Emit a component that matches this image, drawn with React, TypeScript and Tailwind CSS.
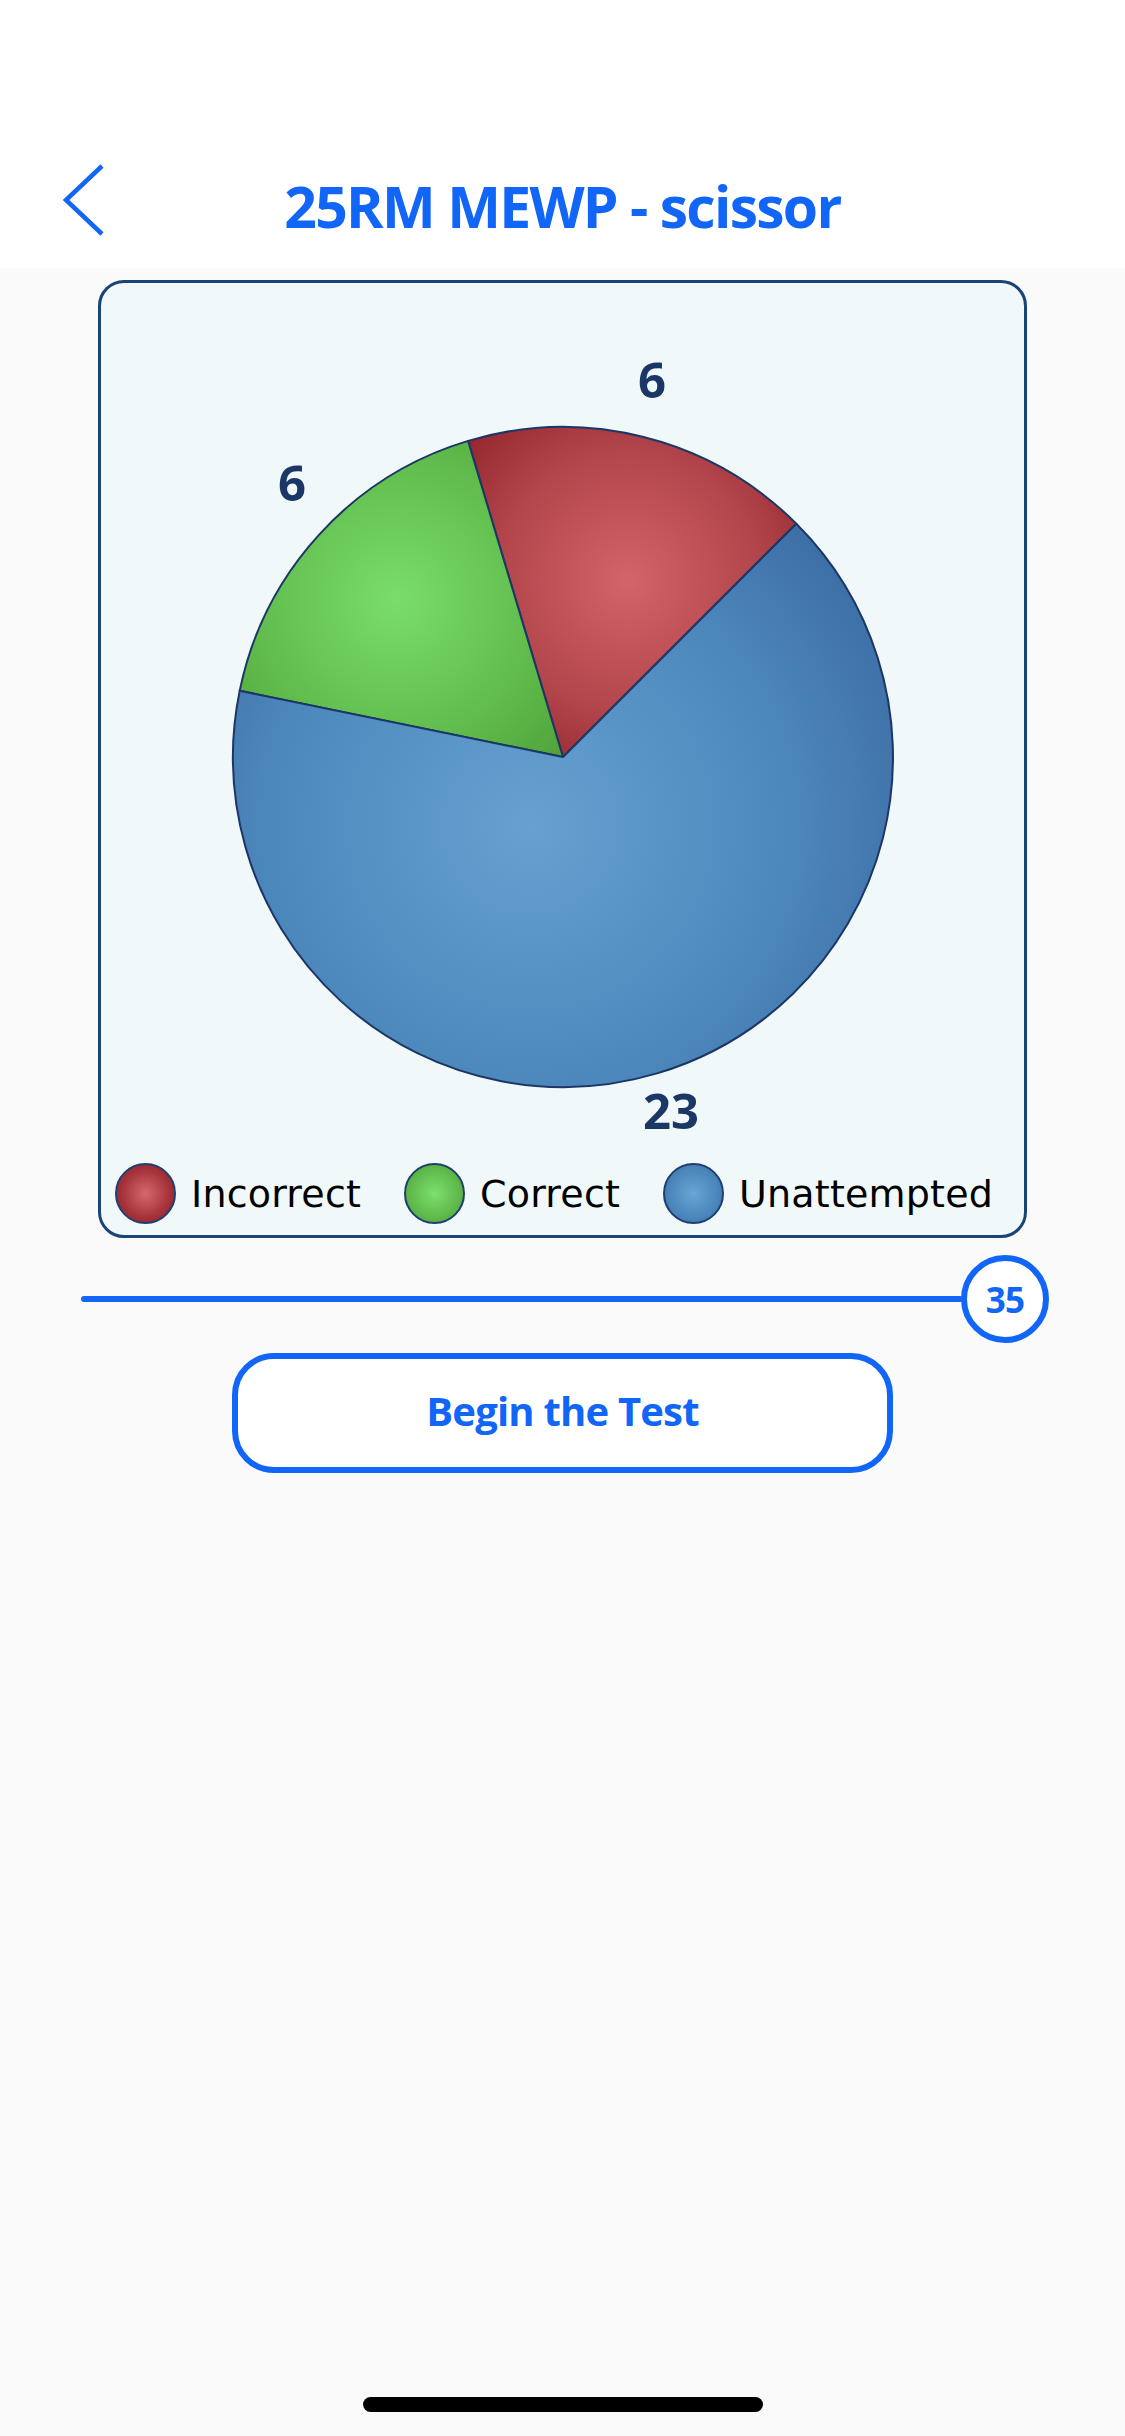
import React from 'react';

const BLUE = '#1166f7';

const slices = [
  { key: 'red', d: 'M462 474 L367.1 157.9 A330 330 0 0 1 695.3 240.7 Z' },
  { key: 'green', d: 'M462 474 L138.7 407.8 A330 330 0 0 1 367.1 157.9 Z' },
  { key: 'blue', d: 'M462 474 L695.3 240.7 A330 330 0 1 1 138.7 407.8 Z' },
];

const PieChart: React.FC = () => (
  <svg width="923" height="880" viewBox="0 0 923 880" className="block">
    <defs>
      <radialGradient id="g-red" gradientUnits="userSpaceOnUse" cx="527" cy="298" r="240">
        <stop offset="0" stopColor="#d3646a" />
        <stop offset="0.55" stopColor="#b2444b" />
        <stop offset="1" stopColor="#8b1d26" />
      </radialGradient>
      <radialGradient id="g-green" gradientUnits="userSpaceOnUse" cx="295" cy="317" r="240">
        <stop offset="0" stopColor="#7add6a" />
        <stop offset="0.55" stopColor="#62bf4f" />
        <stop offset="1" stopColor="#4f9f36" />
      </radialGradient>
      <radialGradient id="g-blue" gradientUnits="userSpaceOnUse" cx="429" cy="543" r="430">
        <stop offset="0" stopColor="#67a1d1" />
        <stop offset="0.6" stopColor="#4d88bd" />
        <stop offset="1" stopColor="#3a6aa2" />
      </radialGradient>
    </defs>
    {slices.map(s => (
      <path key={s.key} d={s.d} fill={`url(#g-${s.key})`} stroke="#1c3766" strokeWidth="2" strokeLinejoin="round" />
    ))}
    <g fill="#1b3766" fontFamily="'Open Sans', sans-serif" fontWeight="700" fontSize="49" textAnchor="middle">
      <text x="551" y="115">6</text>
      <text x="191" y="218">6</text>
      <text x="570" y="846">23</text>
    </g>
  </svg>
);

const LegendItem: React.FC<{ label: string; swatch: string }> = ({ label, swatch }) => (
  <div className="flex items-center gap-[15px]">
    <div className={`w-[61px] h-[61px] rounded-full border-2 border-[#1e3f72] ${swatch}`} />
    <span className="text-[38px] leading-none tracking-[0.005em] text-black font-['DejaVu_Sans',sans-serif]">{label}</span>
  </div>
);

export default function App() {
  return (
    <div className="w-[1125px] min-h-[2436px] bg-[#fafafa] flex flex-col font-['Open_Sans',sans-serif]">
      {/* header */}
      <div className="bg-white h-[268px] pt-[160px]">
        <div className="grid grid-cols-[1fr_auto_1fr] items-center h-[80px]">
          <div className="pl-[62px] flex items-center">
            <svg width="44" height="74" viewBox="0 0 44 74" fill="none">
              <path d="M40 3 L4 37 L40 71" stroke={BLUE} strokeWidth="4.5" strokeLinecap="butt" strokeLinejoin="miter" />
            </svg>
          </div>
          <h1 className="text-[57px] font-bold leading-none tracking-[-0.03em] text-[#1166f7] pt-[12px]">
            25RM MEWP - scissor
          </h1>
          <div />
        </div>
      </div>

      {/* chart card */}
      <div className="mt-[12px] ml-[98px] w-[929px] h-[958px] rounded-[26px] border-[3px] border-[#1a4477] bg-[#f0f8fa] flex flex-col">
        <PieChart />
        <div className="flex items-center gap-[43px] pl-[14px] h-[61px]">
          <LegendItem label="Incorrect" swatch="bg-[radial-gradient(circle_at_50%_50%,#d6686e_0%,#a53139_60%,#8b1d26_100%)]" />
          <LegendItem label="Correct" swatch="bg-[radial-gradient(circle_at_50%_50%,#7de06d_0%,#5fba4b_60%,#4c9b34_100%)]" />
          <LegendItem label="Unattempted" swatch="bg-[radial-gradient(circle_at_50%_50%,#6aa5d4_0%,#4b86bc_60%,#3a6aa2_100%)]" />
        </div>
      </div>

      {/* question count slider */}
      <div className="mt-[17px] flex items-center pl-[81px] pr-[76px]">
        <div className="flex-1 h-[6px] rounded-full bg-[#1166f7]" />
        <div className="-ml-[2px] w-[88px] h-[88px] rounded-full border-[6px] border-[#1166f7] bg-white flex items-center justify-center">
          <span className="text-[35px] font-bold leading-none text-[#1166f7] tracking-[-0.02em]">35</span>
        </div>
      </div>

      {/* begin button */}
      <div className="mt-[10px] flex justify-center">
        <button className="w-[661px] h-[120px] rounded-[42px] border-[6px] border-[#1166f7] bg-white flex items-center justify-center pb-[5px]">
          <span className="text-[40px] font-bold leading-none tracking-[-0.02em] text-[#1166f7]">Begin the Test</span>
        </button>
      </div>

      <div className="flex-1" />

      {/* home indicator */}
      <div className="flex justify-center mb-[24px]">
        <div className="w-[400px] h-[15px] rounded-full bg-black" />
      </div>
    </div>
  );
}
